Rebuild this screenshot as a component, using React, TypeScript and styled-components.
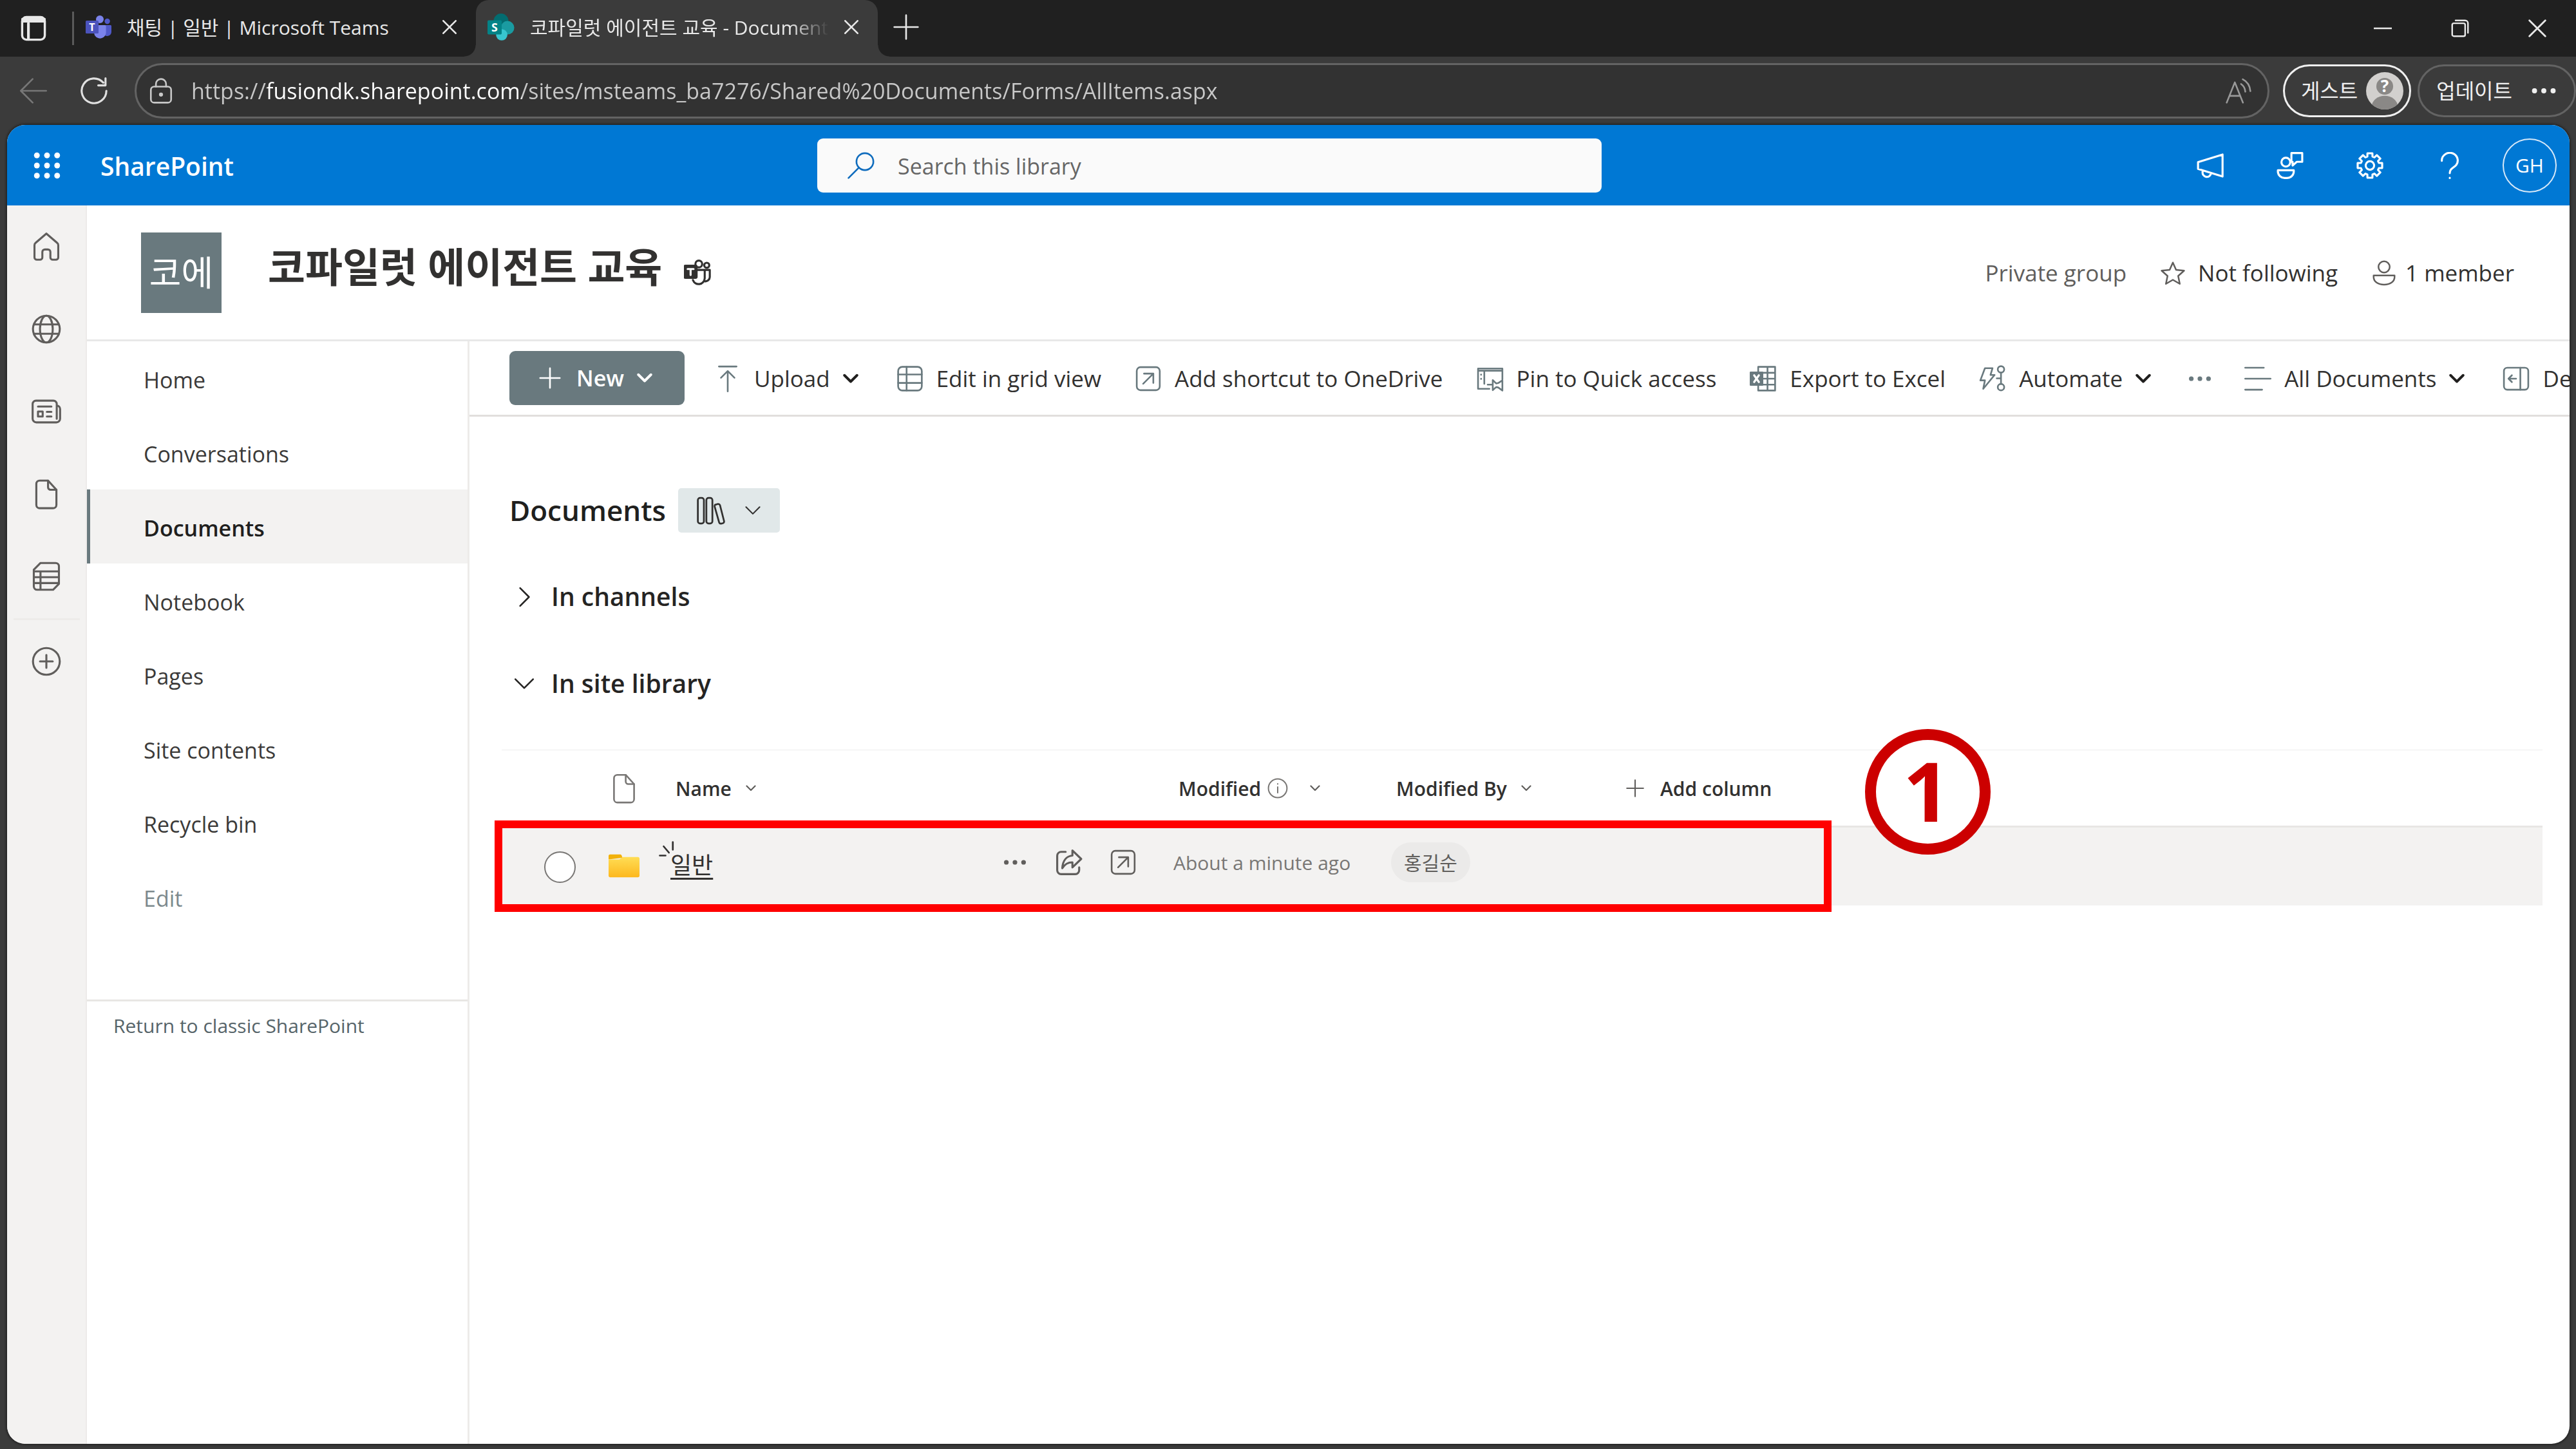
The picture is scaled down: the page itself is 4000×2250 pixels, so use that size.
import React from 'react';
import styled, { createGlobalStyle, css } from 'styled-components';

const GlobalStyle = createGlobalStyle`
  *, *::before, *::after { box-sizing: border-box; }
  body {
    margin: 0;
    background: #3b3b3b;
    color: #323130;
    font-family: "Open Sans", "Noto Sans CJK KR", sans-serif;
    font-size: 34px;
    line-height: 1.3;
  }
  button, input { font: inherit; color: inherit; }
  h1, h2, h3, ul { margin: 0; padding: 0; }
`;

/* ---------- shared ---------- */

const Plain = styled.button`
  display: flex;
  align-items: center;
  justify-content: center;
  padding: 0;
  border: 0;
  background: none;
  white-space: nowrap;
`;

const Svg = styled.svg<{ $size: number; $w?: number }>`
  flex: none;
  display: block;
  width: ${(p) => p.$size}px;
  height: ${(p) => p.$size}px;
  fill: none;
  stroke: currentColor;
  stroke-width: ${(p) => p.$w ?? 1};
  stroke-linecap: round;
  stroke-linejoin: round;
`;

type IconProps = { size?: number; w?: number; box?: number; children?: React.ReactNode };
const Icon = ({ size = 42, w, box = 16, children }: IconProps) => (
  <Svg $size={size} $w={w} viewBox={`0 0 ${box} ${box}`} aria-hidden="true">
    {children}
  </Svg>
);

const Chevron = ({ size = 24, w = 2, dir = 'down' }: { size?: number; w?: number; dir?: 'down' | 'right' }) => (
  <Icon size={size} w={w}>
    <path d={dir === 'down' ? 'M1.5 4.5 8 11l6.500-6.500' : 'M5 1.500 11.500 8 5 14.500'} />
  </Icon>
);

const Dots = ({ size = 42, r = 1.2, spread = 5 }: { size?: number; r?: number; spread?: number }) => (
  <Icon size={size}>
    <g fill="currentColor" stroke="none">
      <circle cx={8 - spread} cy="8" r={r} />
      <circle cx="8" cy="8" r={r} />
      <circle cx={8 + spread} cy="8" r={r} />
    </g>
  </Icon>
);

const Cross = ({ size, w = 1 }: { size: number; w?: number }) => (
  <Icon size={size} box={10} w={w}>
    <path d="M.6.6l8.800 8.800M9.400.6.6 9.400" />
  </Icon>
);

const Plus = ({ size = 42, w = 1, r = 6 }: { size?: number; w?: number; r?: number }) => (
  <Icon size={size} w={w}>
    <path d={`M8 ${8 - r}v${2 * r}M${8 - r} 8h${2 * r}`} />
  </Icon>
);

const ShortcutIcon = () => (
  <Icon>
    <rect x="1.200" y="1.200" width="13.600" height="13.600" rx="2.200" />
    <path d="M5.500 5h5.500v5.500M11 5l-6 6" />
  </Icon>
);

/* ---------- browser chrome ---------- */

const Shell = styled.div`
  display: flex;
  flex-direction: column;
  min-height: 100vh;
`;

const TabStrip = styled.header`
  display: flex;
  align-items: stretch;
  height: 88px;
  background: #202020;
  color: #e8e8e8;
`;

const WorkspaceButton = styled(Plain)`
  width: 104px;
`;

const TabDivider = styled.span`
  align-self: center;
  width: 3px;
  height: 52px;
  margin: 0 0 0 8px;
  background: #5a5a5a;
`;

const Tab = styled.div<{ $active?: boolean }>`
  position: relative;
  display: flex;
  align-items: center;
  gap: 24px;
  width: 624px;
  padding: 0 30px 4px 18px;
  font-size: 30px;
  ${(p) =>
    p.$active &&
    css`
      background: #3b3b3b;
      border-radius: 20px 20px 0 0;
      &::before,
      &::after {
        content: '';
        position: absolute;
        bottom: 0;
        width: 18px;
        height: 18px;
      }
      &::before {
        left: -18px;
        background: radial-gradient(circle at 0 0, transparent 17px, #3b3b3b 18px);
      }
      &::after {
        right: -18px;
        background: radial-gradient(circle at 100% 0, transparent 17px, #3b3b3b 18px);
      }
    `}
`;

const TabTitle = styled.span<{ $fade?: boolean }>`
  flex: 1;
  min-width: 0;
  overflow: hidden;
  white-space: nowrap;
  ${(p) => p.$fade && 'mask-image: linear-gradient(90deg, #000 calc(100% - 60px), transparent);'}
`;

const NewTab = styled(Plain)`
  width: 88px;
  padding: 0 0 4px;
`;

const WindowControls = styled.div`
  display: flex;
  margin-left: auto;
`;

const WindowButton = styled(Plain)`
  width: 120px;
`;

const Toolbar = styled.div`
  display: flex;
  align-items: center;
  height: 106px;
  padding-left: 31px;
  color: #e8e8e8;
`;

const NavButton = styled(Plain)<{ $dim?: boolean; $gap: number }>`
  margin-right: ${(p) => p.$gap}px;
  color: ${(p) => (p.$dim ? '#777' : '#e0e0e0')};
`;

const Address = styled.label`
  display: flex;
  flex: 1;
  align-items: center;
  gap: 26px;
  height: 86px;
  padding: 0 24px 0 17px;
  border: 3px solid #636363;
  border-radius: 43px;
  background: #323232;
  color: #c8c8c8;
`;

const AddressInput = styled.input`
  flex: 1;
  min-width: 0;
  padding: 0;
  border: 0;
  outline: 0;
  background: linear-gradient(90deg, #c8c8c8 118px, #fff 118px, #fff 513px, #c8c8c8 513px);
  background-clip: text;
  -webkit-text-fill-color: transparent;
`;

const ReadAloud = styled(Plain)`
  color: #999;
`;

const Pill = styled(Plain)<{ $bright?: boolean }>`
  height: 82px;
  margin-left: ${(p) => (p.$bright ? 21 : 10)}px;
  padding: ${(p) => (p.$bright ? '0 9px 0 25px' : '0 26px 0 26px')};
  gap: ${(p) => (p.$bright ? 13 : 28)}px;
  border: 3px solid ${(p) => (p.$bright ? '#f0f0f0' : '#636363')};
  border-radius: 41px;
  color: #f0f0f0;
  font-size: 32px;
`;

/* ---------- page frame ---------- */

const Page = styled.div`
  display: flex;
  flex: 1;
  flex-direction: column;
  margin: 0 10px 8px 11px;
  overflow: hidden;
  border-radius: 28px;
  background: #fff;
  box-shadow: 0 0 3px 2px #262626;
`;

const SuiteBar = styled.header`
  display: grid;
  grid-template-columns: 1258px minmax(0, 1218px) 1fr;
  align-items: center;
  height: 125px;
  background: #0078d4;
  color: #fff;
`;

const SuiteLeft = styled.div`
  display: flex;
  align-items: center;
`;

const SuiteButton = styled(Plain)`
  width: 124px;
  height: 124px;
`;

const SuiteName = styled.a`
  margin-left: 21px;
  padding-top: 4px;
  color: #fff;
  font-size: 39px;
  font-weight: 600;
  text-decoration: none;
`;

const SearchBox = styled.label`
  display: flex;
  align-items: center;
  gap: 36px;
  height: 84px;
  padding: 0 47px;
  border-radius: 9px;
  background: #fafafa;
  color: #0f6cbd;
`;

const SearchInput = styled.input`
  flex: 1;
  min-width: 0;
  padding: 4px 0 0;
  border: 0;
  outline: 0;
  background: none;
  color: #323130;
  &::placeholder {
    color: #666;
    opacity: 1;
  }
`;

const SuiteRight = styled.div`
  display: flex;
  justify-content: flex-end;
`;

const Persona = styled.span`
  display: grid;
  place-items: center;
  width: 84px;
  height: 84px;
  border: 2px solid #d6e8f8;
  border-radius: 50%;
  font-size: 30px;
`;

const Below = styled.div`
  display: flex;
  flex: 1;
`;

const Rail = styled.nav`
  display: flex;
  flex: none;
  flex-direction: column;
  width: 124px;
  border-right: 2px solid #edebe9;
  background: #f3f2f1;
  color: #605e5c;
`;

const RailButton = styled(Plain)`
  height: 128px;
`;

const RailRule = styled.hr`
  width: 103px;
  height: 3px;
  margin: 1px auto 0;
  border: 0;
  background: #edebe9;
`;

const Site = styled.div`
  display: flex;
  flex: 1;
  flex-direction: column;
  min-width: 0;
`;

const SiteHeader = styled.div`
  display: flex;
  align-items: center;
  height: 211px;
  padding: 0 86px 0 84px;
  border-bottom: 3px solid #e8e8e8;
`;

const SiteLogo = styled.a`
  display: grid;
  place-items: center;
  width: 125px;
  height: 125px;
  background: #69797e;
  color: #fff;
  font-size: 54px;
  text-decoration: none;
`;

const SiteTitle = styled.h1`
  margin: 0 34px 18px 72px;
  font-size: 63px;
  font-weight: 700;
  line-height: 76px;
`;

const SiteMeta = styled.div`
  display: flex;
  align-items: center;
  gap: 52px;
  margin-left: auto;
  padding-top: 2px;
  font-size: 35px;
`;

const MetaButton = styled(Plain)<{ $gap: number }>`
  gap: ${(p) => p.$gap}px;
  & > svg { color: #605e5c; }
`;

const GroupType = styled.span`
  color: #605e5c;
`;

const SiteBody = styled.div`
  display: flex;
  flex: 1;
`;

const SideNav = styled.nav`
  flex: none;
  width: 594px;
  border-right: 3px solid #edebe9;
`;

const NavList = styled.ul`
  padding-bottom: 102px;
  border-bottom: 3px solid #e8e6e4;
  list-style: none;
`;

const NavLink = styled.a<{ $on?: boolean; $muted?: boolean }>`
  display: flex;
  align-items: center;
  height: 115px;
  padding: 5px 0 0 83px;
  border-left: 5px solid ${(p) => (p.$on ? '#69797e' : 'transparent')};
  background: ${(p) => (p.$on ? '#f3f2f1' : 'none')};
  color: ${(p) => (p.$on ? '#201f1e' : p.$muted ? '#7c898d' : '#3b3a39')};
  font-weight: ${(p) => (p.$on ? 600 : 400)};
  text-decoration: none;
`;

const ClassicLink = styled.a`
  display: block;
  padding: 18px 41px;
  color: #566469;
  font-size: 30px;
  font-weight: 500;
  text-decoration: none;
`;

const Main = styled.main`
  flex: 1;
  min-width: 0;
`;

const CommandBar = styled.div`
  display: flex;
  align-items: center;
  height: 117px;
  padding-left: 62px;
  overflow: hidden;
  border-bottom: 3px solid #e1dfdd;
`;

const NewButton = styled(Plain)`
  flex: none;
  height: 84px;
  margin-right: 20px;
  padding: 0 50px 0 42px;
  gap: 20px;
  border-radius: 9px;
  background: #69797e;
  color: #fff;
  font-weight: 600;
`;

const Command = styled(Plain)`
  flex: none;
  height: 84px;
  padding: 2px 26px 0;
  gap: 20px;
  font-size: 35px;
`;

const CommandIcon = styled.span`
  color: #69797e;
`;

const CommandChevron = styled.span`
  margin-right: 7px;
  color: #201f1e;
`;

const Library = styled.section`
  padding: 111px 42px 0 50px;
`;

const LibraryHead = styled.div`
  display: flex;
  align-items: center;
  gap: 19px;
  height: 69px;
  margin: 0 0 32px 12px;
`;

const LibraryTitle = styled.h2`
  color: #201f1e;
  font-size: 44px;
  font-weight: 600;
`;

const LibrarySwitch = styled(Plain)`
  width: 158px;
  height: 69px;
  gap: 30px;
  border-radius: 5px;
  background: #e1e8e9;
`;

const SectionToggle = styled(Plain)`
  height: 135px;
  margin-left: 18px;
  gap: 25px;
  color: #252423;
  font-size: 39px;
  font-weight: 600;
`;

const TableWrap = styled.div`
  position: relative;
  margin-top: 34px;
`;

const Table = styled.table`
  width: 100%;
  table-layout: fixed;
  border-collapse: collapse;
  border-top: 3px solid #f8f8f8;
  font-size: 30px;
`;

const Col = styled.col<{ $w?: number }>`
  ${(p) => p.$w && `width: ${p.$w}px;`}
`;

const HeadRow = styled.tr`
  height: 119px;
  border-bottom: 3px solid #e8e6e4;
`;

const HeadCell = styled.th`
  padding: 0 0 0 30px;
  color: #323130;
  font-weight: 600;
  text-align: left;
`;

const HeadButton = styled(Plain)`
  gap: 22px;
  font-weight: 600;
  & > svg { color: #605e5c; }
`;

const Label = styled.span`
  display: flex;
  align-items: center;
  gap: 10px;
  padding-right: 12px;
  & > svg { color: #797775; }
`;

const Row = styled.tr`
  height: 122px;
  background: #f3f2f1;
`;

const Cell = styled.td`
  padding: 0 14px 12px 22px;
  color: #797775;
`;

const IconCell = styled(Cell)<{ $row?: boolean }>`
  padding: ${(p) => (p.$row ? '0 0 2px' : '0')};
  & > svg { margin: 0 auto; }
`;

const RowRadio = styled.input`
  display: block;
  appearance: none;
  width: 49px;
  height: 49px;
  margin: 4px 0 0 66px;
  border: 2px solid #797775;
  border-radius: 50%;
  background: #fff;
`;

const NameBox = styled.div`
  display: flex;
  align-items: center;
`;

const FileLink = styled.a`
  position: relative;
  margin: 10px auto 0 0;
  color: #323130;
  font-size: 36px;
  text-decoration: underline;
  text-decoration-thickness: 3px;
  text-underline-offset: 6px;
  & > svg {
    position: absolute;
    top: -15px;
    left: -18px;
  }
`;

const RowAction = styled(Plain)`
  width: 84px;
  height: 84px;
  color: #605e5c;
`;

const PersonChip = styled.span`
  display: inline-flex;
  align-items: center;
  height: 62px;
  padding: 0 20px;
  border-radius: 31px;
  background: #ebeae9;
  color: #605e5c;
`;

const Highlight = styled.div`
  position: absolute;
  top: 111px;
  left: -11px;
  width: 2076px;
  height: 142px;
  border: 12px solid #f00;
  pointer-events: none;
`;

const StepBadge = styled.div`
  position: absolute;
  top: -31px;
  left: 2117px;
  display: grid;
  place-items: center;
  width: 195px;
  height: 195px;
  padding: 0 4px 6px 0;
  border: 17px solid #c00;
  border-radius: 50%;
  background: #fff;
  color: #c00;
  font-size: 128px;
  font-weight: 700;
  line-height: 1;
`;

/* ---------- drawings ---------- */

const TeamsLogo = () => (
  <Icon size={40} box={20}>
    <g stroke="none">
      <circle cx="16.800" cy="5.500" r="2.100" fill="#5059c9" />
      <path d="M13 8.500h6.200c.5 0 .8.300.8.800v4.400a3.300 3.300 0 0 1-5 2.800z" fill="#5059c9" />
      <circle cx="11" cy="4" r="3" fill="#7b83eb" />
      <path d="M6.500 8.500h8.300c.6 0 1 .4 1 1v5.300a4.700 4.700 0 0 1-9.300 0z" fill="#7b83eb" />
      <rect x="0" y="5" width="10" height="10" rx=".8" fill="#4b53bc" />
      <text x="5" y="13" fontSize="8" fontWeight="700" textAnchor="middle" fill="#fff">T</text>
    </g>
  </Icon>
);

const SharePointLogo = () => (
  <Icon size={42} box={20}>
    <g stroke="none">
      <circle cx="10" cy="5.500" r="5.500" fill="#036c70" />
      <circle cx="14.800" cy="10.500" r="5" fill="#1a9ba1" />
      <circle cx="10.500" cy="15.700" r="4.200" fill="#37c6d0" />
      <rect x="0" y="5" width="10.500" height="10.500" rx=".8" fill="#038387" />
      <text x="5.200" y="13.300" fontSize="8.500" fontWeight="700" textAnchor="middle" fill="#fff">S</text>
    </g>
  </Icon>
);

const gearPath = (() => {
  const pts: string[] = [];
  for (let i = 0; i < 8; i++) {
    const a = (i * Math.PI) / 4 - Math.PI / 2;
    [
      [-0.28, 5.5],
      [-0.2, 7.4],
      [0.2, 7.4],
      [0.28, 5.5],
    ].forEach(([d, r]) => pts.push(`${(8 + r * Math.cos(a + d)).toFixed(2)} ${(8 + r * Math.sin(a + d)).toFixed(2)}`));
  }
  return `M${pts.join('L')}z`;
})();

const PageIcon = ({ size = 52, w = 1.2 }: { size?: number; w?: number }) => (
  <Icon size={size} box={20} w={w}>
    <path d="M11 2H6a2 2 0 0 0-2 2v12.500a2 2 0 0 0 2 2h8a2 2 0 0 0 2-2V7.500z" />
    <path d="M11 2v4a1.500 1.500 0 0 0 1.500 1.500H16" />
  </Icon>
);

const railItems: { label: string; icon: React.ReactNode }[] = [
  {
    label: 'SharePoint home',
    icon: (
      <path d="M10 2.200 3.500 7.800c-.4.300-.6.800-.6 1.300v7.300c0 .8.600 1.400 1.400 1.400h1.900c.8 0 1.400-.6 1.400-1.400v-3.200c0-.9.700-1.500 1.500-1.500h1.800c.8 0 1.500.6 1.500 1.500v3.200c0 .8.600 1.400 1.400 1.400h1.900c.8 0 1.400-.6 1.400-1.400V9.100c0-.5-.2-1-.6-1.300z" />
    ),
  },
  {
    label: 'My sites',
    icon: (
      <>
        <circle cx="10" cy="10" r="8" />
        <ellipse cx="10" cy="10" rx="3.800" ry="8" />
        <path d="M2.700 7.200h14.600M2.700 12.800h14.600" />
      </>
    ),
  },
  {
    label: 'My news',
    icon: (
      <>
        <path d="M3.800 3.500h10.400a2 2 0 0 1 2 2v8.800M16.200 6.500a2 2 0 0 1 2 2v5.800a2.200 2.200 0 0 1-2.200 2.200H4a2.200 2.200 0 0 1-2.200-2.200V5.500a2 2 0 0 1 2-2" />
        <path d="M5 7h8M10.300 10.200H13M10.300 13H13M5 10h2.800v3H5z" />
      </>
    ),
  },
  { label: 'My files', icon: null },
  {
    label: 'My lists',
    icon: (
      <>
        <path d="M6.500 2h9a2 2 0 0 1 2 2v10.500L14 18H4.500a2 2 0 0 1-2-2V6zM2.500 7h15M2.500 10.500h15M2.500 14h15M6.500 7v11" />
      </>
    ),
  },
];

const navItems = ['Home', 'Conversations', 'Documents', 'Notebook', 'Pages', 'Site contents', 'Recycle bin', 'Edit'];

const commands: { label?: string; menu?: boolean; icon: React.ReactNode }[] = [
  { label: 'Upload', menu: true, icon: <Icon><path d="M2.800.8h10.400M8 15.500V3.500M4 7.500l4-4 4 4" /></Icon> },
  {
    label: 'Edit in grid view',
    icon: (
      <Icon>
        <rect x="1" y="1" width="14" height="14" rx="2.500" />
        <path d="M1 5.500h14M1 10.500h14M6 1v14" />
      </Icon>
    ),
  },
  { label: 'Add shortcut to OneDrive', icon: <ShortcutIcon /> },
  {
    label: 'Pin to Quick access',
    icon: (
      <Icon>
        <path d="M15.200 8.500V2H.8v12h6.700M.8 3.300h14.400M4.500 3.300V11M2.600 5.500v.2M2.600 8v.2" />
        <path d="M6.500 11.500h3M9.500 8.800v6l2-1.800 1.200.2 2.500 1.800V9l-2.500 1.600-1.200.2z" />
      </Icon>
    ),
  },
  {
    label: 'Export to Excel',
    icon: (
      <Icon>
        <path d="M5 1h10v14H5zM5 4.500h10M5 8h10M5 11.500h10M10.500 1v14" />
        <rect x=".5" y="4.300" width="7" height="7.400" fill="currentColor" />
        <path d="M2.600 6l2.800 4M5.400 6l-2.800 4" stroke="#fff" strokeWidth="1.200" />
      </Icon>
    ),
  },
  {
    label: 'Automate',
    menu: true,
    icon: (
      <Icon>
        <path d="M3.500 1.800H8L6.800 5.800h2.400L2.500 14l1-5H.8z" />
        <circle cx="13" cy="2.500" r="1.900" />
        <circle cx="13" cy="13" r="1.900" />
        <path d="M13 4.400v6.700M13 7.800h-2.500" />
      </Icon>
    ),
  },
  { icon: <Dots size={34} r={1.7} spread={6.300} /> },
  { label: 'All Documents', menu: true, icon: <Icon><path d="M.5 1.500h11M.5 8h15M.5 14.500h10" /></Icon> },
  {
    label: 'Details',
    icon: (
      <Icon>
        <rect x=".8" y="1.500" width="14.400" height="13" rx="2" />
        <path d="M10.500 1.500v13M8 8H3.500M5.500 6l-2 2 2 2" />
      </Icon>
    ),
  },
];

const Browser = () => (
  <>
    <TabStrip>
      <WorkspaceButton aria-label="Tab actions">
        <Icon w={1.3}>
          <rect x="1.300" y="1.300" width="13.400" height="13.400" rx="2.500" />
          <path d="M1.500 3.800h13M1.500 2.600h13M5 5v9.500" strokeWidth="1.600" />
        </Icon>
      </WorkspaceButton>
      <TabDivider />
      <Tab>
        <TeamsLogo />
        <TabTitle>채팅 | 일반 | Microsoft Teams</TabTitle>
        <Plain aria-label="Close tab"><Cross size={22} w={1.2} /></Plain>
      </Tab>
      <Tab $active>
        <SharePointLogo />
        <TabTitle $fade>코파일럿 에이전트 교육 - Documents</TabTitle>
        <Plain aria-label="Close tab"><Cross size={22} w={1.2} /></Plain>
      </Tab>
      <NewTab aria-label="New tab"><Plus size={42} r={7} /></NewTab>
      <WindowControls>
        <WindowButton aria-label="Minimize"><Icon size={28}><path d="M0 8h16" strokeWidth="1.500" /></Icon></WindowButton>
        <WindowButton aria-label="Restore">
          <Icon size={28} w={1.4}>
            <rect x="1" y="3.500" width="11.500" height="11.500" rx="1.500" />
            <path d="M4 1h8.500A2.500 2.500 0 0 1 15 3.500V12" />
          </Icon>
        </WindowButton>
        <WindowButton aria-label="Close"><Cross size={28} /></WindowButton>
      </WindowControls>
    </TabStrip>
    <Toolbar>
      <NavButton aria-label="Back" $dim $gap={52}>
        <Icon><path d="M.5 8h15M7.500 1 .5 8l7 7" /></Icon>
      </NavButton>
      <NavButton aria-label="Refresh" $gap={42}>
        <Icon w={1.2}><path d="M15.300 8A7.300 7.300 0 1 1 13.500 3.200M14.800.6v4.200h-4.300" /></Icon>
      </NavButton>
      <Address>
        <Icon>
          <rect x="2" y="5.500" width="12" height="9.500" rx="2" />
          <path d="M5 5.500V4a3 3 0 0 1 6 0v1.500" />
          <circle cx="8" cy="10.200" r=".7" fill="currentColor" />
        </Icon>
        <AddressInput
          aria-label="Address"
          defaultValue="https://fusiondk.sharepoint.com/sites/msteams_ba7276/Shared%20Documents/Forms/AllItems.aspx"
        />
        <ReadAloud aria-label="Read aloud">
          <Icon>
            <path d="M1 15 5.800 3 10.600 15M2.800 11h6" />
            <path d="M9.500 4c1.500 1 2.300 2.500 2.500 4.500M10.500 1.200c2.600 1.300 4.200 3.800 4.500 7" />
          </Icon>
        </ReadAloud>
      </Address>
      <Pill $bright>
        게스트
        <Icon size={58} box={20}>
          <g stroke="none">
            <clipPath id="avatar"><circle cx="10" cy="10" r="10" /></clipPath>
            <circle cx="10" cy="10" r="10" fill="#d2d0ce" />
            <circle cx="10" cy="7.600" r="4.500" fill="#8a8886" />
            <ellipse cx="10" cy="18.500" rx="7" ry="5.800" fill="#8a8886" clipPath="url(#avatar)" />
            <text x="10" y="10.800" fontSize="9" fontWeight="700" textAnchor="middle" fill="#fff">?</text>
          </g>
        </Icon>
      </Pill>
      <Pill>
        업데이트
        <Dots size={42} r={1.5} spread={5.500} />
      </Pill>
    </Toolbar>
  </>
);

const Suite = () => (
  <SuiteBar>
    <SuiteLeft>
      <SuiteButton aria-label="App launcher">
        <Icon>
          <g fill="currentColor" stroke="none">
            {[2, 8, 14].map((y) => [2, 8, 14].map((x) => <circle key={`${x}-${y}`} cx={x} cy={y} r="1.700" />))}
          </g>
        </Icon>
      </SuiteButton>
      <SuiteName href="#">SharePoint</SuiteName>
    </SuiteLeft>
    <SearchBox>
      <Icon>
        <circle cx="10.300" cy="5.700" r="5" />
        <path d="M6.700 9.300.6 15.400" />
      </Icon>
      <SearchInput type="search" aria-label="Search this library" placeholder="Search this library" />
    </SearchBox>
    <SuiteRight>
      <SuiteButton aria-label="What's new">
        <Icon w={1.2}><path d="M15.300 1.500v13L.8 10V6zM3.500 11v.8a2.500 2.500 0 0 0 5 .8" /></Icon>
      </SuiteButton>
      <SuiteButton aria-label="Feedback">
        <Icon w={1.2}>
          <circle cx="5.500" cy="6" r="2.600" />
          <path d="M.8 10.800h9.400v1a4 4 0 0 1-4 3.600H4.800a4 4 0 0 1-4-3.600zM8.800.6h6.400v5.200h-3.200L9.500 8V5.800h-.7z" />
        </Icon>
      </SuiteButton>
      <SuiteButton aria-label="Settings">
        <Icon w={1.2}>
          <path d={gearPath} />
          <circle cx="8" cy="8" r="2.500" />
        </Icon>
      </SuiteButton>
      <SuiteButton aria-label="Help">
        <Icon w={1.2}>
          <path d="M3.300 5.200a4.700 4.500 0 1 1 7.800 3.200C9.300 9.800 8 10.300 8 12.500M8 15.300v.1" />
        </Icon>
      </SuiteButton>
      <SuiteButton aria-label="Account manager"><Persona>GH</Persona></SuiteButton>
    </SuiteRight>
  </SuiteBar>
);

const Documents = () => (
  <Library>
    <LibraryHead>
      <LibraryTitle>Documents</LibraryTitle>
      <LibrarySwitch aria-label="Switch library">
        <Icon size={44}>
          <rect x=".6" y=".8" width="3.400" height="14.400" rx="1.200" />
          <rect x="5.400" y=".8" width="3.400" height="14.400" rx="1.200" />
          <path d="M10.300 4.700 12 4.200q.8-.1 1.100.7l2.300 9q.1.900-.7 1.200l-1 .2q-.8.100-1.100-.7l-2.500-8.800q-.1-.8.200-1.100" />
        </Icon>
        <Chevron size={26} w={1.3} />
      </LibrarySwitch>
    </LibraryHead>
    <h3>
      <SectionToggle aria-expanded="false">
        <Chevron size={34} w={1.2} dir="right" />
        In channels
      </SectionToggle>
    </h3>
    <h3>
      <SectionToggle aria-expanded="true">
        <Chevron size={34} w={1.2} />
        In site library
      </SectionToggle>
    </h3>
    <TableWrap>
      <Table>
        <colgroup>
          <Col $w={140} />
          <Col $w={100} />
          <Col $w={781} />
          <Col $w={338} />
          <Col $w={354} />
          <Col />
        </colgroup>
        <thead>
          <HeadRow>
            <HeadCell aria-label="Selection" />
            <IconCell as="th" aria-label="File type"><PageIcon size={52} w={1} /></IconCell>
            <HeadCell><HeadButton>Name <Chevron size={16} w={2.2} /></HeadButton></HeadCell>
            <HeadCell>
              <HeadButton>
                <Label>
                  Modified
                  <Icon size={32}>
                    <circle cx="8" cy="8" r="7.200" />
                    <path d="M8 7v4.500M8 4.500v.2" />
                  </Icon>
                </Label>
                <Chevron size={16} w={2.2} />
              </HeadButton>
            </HeadCell>
            <HeadCell><HeadButton>Modified By <Chevron size={16} w={2.2} /></HeadButton></HeadCell>
            <HeadCell><HeadButton><Plus size={34} /> Add column</HeadButton></HeadCell>
          </HeadRow>
        </thead>
        <tbody>
          <Row>
            <IconCell $row><RowRadio type="radio" name="row" aria-label="Select 일반" /></IconCell>
            <IconCell $row>
              <Icon size={48} box={20}>
                <defs>
                  <linearGradient id="folder" x1="0" y1="0" x2="0" y2="1">
                    <stop offset="0" stopColor="#ffdd55" />
                    <stop offset="1" stopColor="#fdb81e" />
                  </linearGradient>
                </defs>
                <g stroke="none">
                  <path d="M0 6V3.700c0-.5.400-.9.900-.9h6.500c.4 0 .8.200 1 .5L9 5z" fill="#f2b10a" />
                  <path d="M0 6h7L9 4.500h10c.6 0 1 .4 1 1v11.100c0 .5-.4 1-1 1H1c-.6 0-1-.5-1-1z" fill="url(#folder)" />
                </g>
              </Icon>
            </IconCell>
            <Cell>
              <NameBox>
                <FileLink href="#">
                  일반
                  <Icon size={24} w={1.8}><path d="M14.500 1v8M5 5.500l5.500 6.500M1 15h6" /></Icon>
                </FileLink>
                <RowAction aria-label="More actions"><Dots size={34} r={1.7} spread={6.300} /></RowAction>
                <RowAction aria-label="Share">
                  <Icon w={1.2}>
                    <path d="M6 1.800H3.300A2.300 2.300 0 0 0 1 4.100v8.600A2.300 2.300 0 0 0 3.300 15h8.400a2.300 2.300 0 0 0 2.300-2.300V11" />
                    <path d="M10 1v3C6.500 4.300 4.300 7 4 11.500c1.500-2.500 3.500-3.500 6-3.500v3l5.200-5z" />
                  </Icon>
                </RowAction>
                <RowAction aria-label="Add shortcut"><ShortcutIcon /></RowAction>
              </NameBox>
            </Cell>
            <Cell>About a minute ago</Cell>
            <Cell><PersonChip>홍길순</PersonChip></Cell>
            <Cell />
          </Row>
        </tbody>
      </Table>
      <Highlight />
      <StepBadge>1</StepBadge>
    </TableWrap>
  </Library>
);

export default function App() {
  return (
    <>
      <GlobalStyle />
      <Shell>
        <Browser />
        <Page>
          <Suite />
          <Below>
            <Rail aria-label="App bar">
              {railItems.map((item) => (
                <RailButton key={item.label} aria-label={item.label}>
                  {item.icon ? <Icon size={52} box={20} w={1.2}>{item.icon}</Icon> : <PageIcon />}
                </RailButton>
              ))}
              <RailRule />
              <RailButton aria-label="Create">
                <Icon size={52} box={20} w={1.2}>
                  <circle cx="10" cy="10" r="8" />
                  <path d="M10 6.200v7.600M6.200 10h7.600" />
                </Icon>
              </RailButton>
            </Rail>
            <Site>
              <SiteHeader>
                <SiteLogo href="#">코에</SiteLogo>
                <SiteTitle>코파일럿 에이전트 교육</SiteTitle>
                <Icon size={42} w={1.2}>
                  <circle cx="8.800" cy="3" r="2" />
                  <circle cx="13.500" cy="3.800" r="1.500" />
                  <path d="M8 6.500h4.300v5a3.600 3.600 0 0 1-7 1M12.300 6.500h3v4.300a2.500 2.500 0 0 1-3 2.400" />
                  <rect x=".3" y="4" width="7.200" height="7.200" rx=".6" fill="currentColor" />
                  <path d="M2.200 6h3.500M3.950 6v3.500" stroke="#fff" />
                </Icon>
                <SiteMeta>
                  <GroupType>Private group</GroupType>
                  <MetaButton $gap={19}>
                    <Icon size={40}><path d="m8 1.500 2 4.500 5 .5-3.700 3.300 1 4.900L8 12.200l-4.300 2.500 1-4.900L1 6.500 6 6z" /></Icon>
                    Not following
                  </MetaButton>
                  <MetaButton $gap={13}>
                    <Icon size={40}>
                      <circle cx="8" cy="4.200" r="3.500" />
                      <path d="M1.500 9.500h13v1c0 2.800-2.800 4.700-6.500 4.700s-6.500-1.900-6.500-4.700z" />
                    </Icon>
                    1 member
                  </MetaButton>
                </SiteMeta>
              </SiteHeader>
              <SiteBody>
                <SideNav aria-label="Site">
                  <NavList>
                    {navItems.map((name) => (
                      <li key={name}>
                        <NavLink href="#" $on={name === 'Documents'} $muted={name === 'Edit'}>{name}</NavLink>
                      </li>
                    ))}
                  </NavList>
                  <ClassicLink href="#">Return to classic SharePoint</ClassicLink>
                </SideNav>
                <Main>
                  <CommandBar>
                    <NewButton><Plus r={5.8} /> New <Chevron w={2.6} /></NewButton>
                    {commands.map((c, i) => (
                      <Command key={i} aria-label={c.label ?? 'More commands'}>
                        <CommandIcon>{c.icon}</CommandIcon>
                        {c.label}
                        {c.menu && <CommandChevron><Chevron w={2.6} /></CommandChevron>}
                      </Command>
                    ))}
                  </CommandBar>
                  <Documents />
                </Main>
              </SiteBody>
            </Site>
          </Below>
        </Page>
      </Shell>
    </>
  );
}
